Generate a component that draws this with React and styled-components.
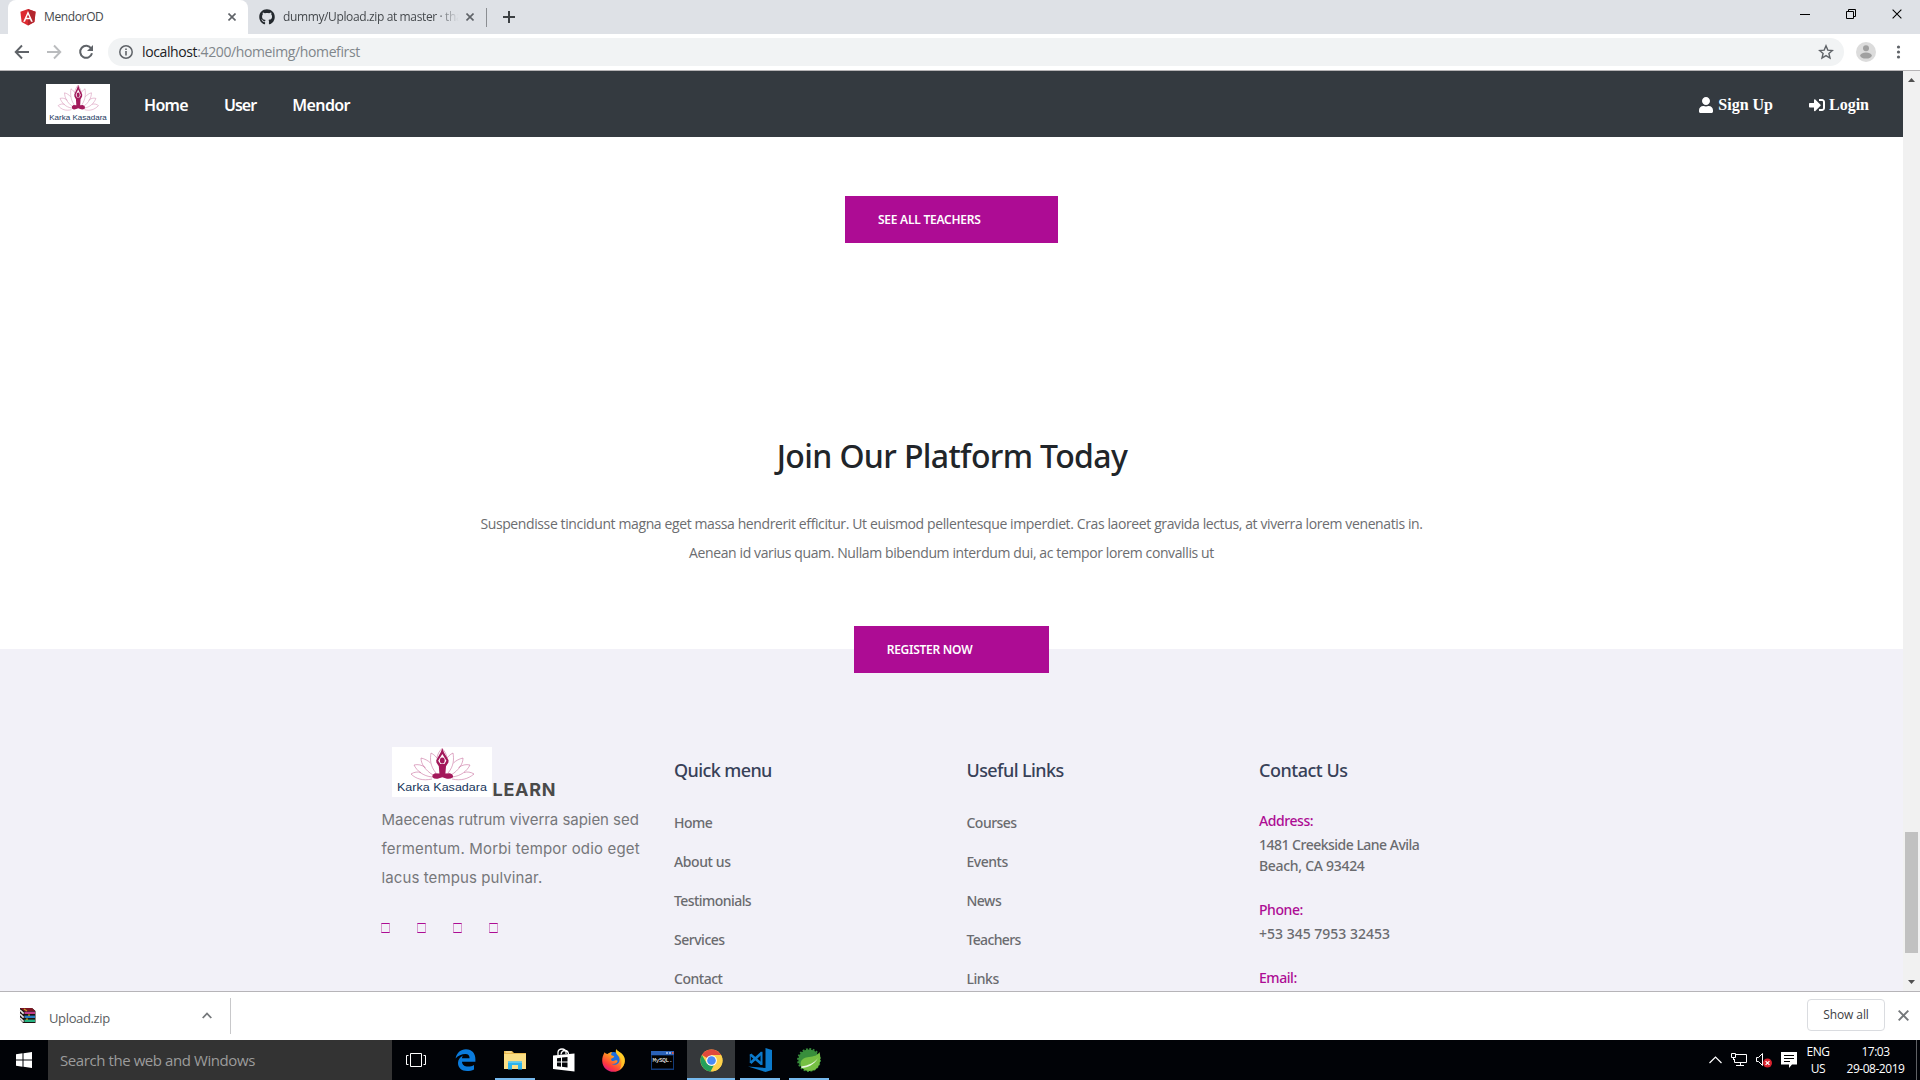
import React from 'react';
import styled, { createGlobalStyle } from 'styled-components';
import { FaUser, FaSignInAlt, FaGithub } from 'react-icons/fa';

const UI = '"Open Sans", "Noto Sans", sans-serif';
const SEMI = '"Noto Sans", "Open Sans", sans-serif';

const Global = createGlobalStyle`
  * { box-sizing: border-box; }
  body { margin: 0; background: #fff; overflow: hidden; font-family: ${UI}; }
  svg { display: block; flex: none; }
`;

const Screen = styled.div`
  width: 1920px;
  height: 1080px;
  display: flex;
  flex-direction: column;
  overflow: hidden;
`;

/* ---------- browser chrome ---------- */
const TabStrip = styled.div`
  height: 34px;
  background: #dee1e6;
  display: flex;
  align-items: stretch;
  padding-left: 8px;
`;
const Tab = styled.div`
  width: ${(p) => (p.$active ? 240 : 238)}px;
  display: flex;
  align-items: center;
  padding: 0 12px 0 ${(p) => (p.$active ? 12 : 11)}px;
  background: ${(p) => (p.$active ? '#fff' : 'transparent')};
  border-radius: 8px 8px 0 0;
`;
const TabTitle = styled.span`
  flex: 1;
  min-width: 0;
  margin-left: 8px;
  overflow: hidden;
  white-space: nowrap;
  font-size: 12px;
  line-height: 16px;
  letter-spacing: -0.37px;
  color: #45494d;
  ${(p) => p.$fade && 'mask-image: linear-gradient(to right, #000 84%, transparent 96%);'}
`;
const TabDivider = styled.div`
  width: 1px;
  height: 19px;
  margin: 8px 16px 0 0;
  background: #8b8e92;
`;
const NewTab = styled.div`
  display: flex;
  align-items: center;
  flex: 1;
`;
const WindowControls = styled.div`
  display: flex;
  align-items: flex-start;
  gap: 36px;
  padding: 9px 18px 0 0;
`;
const Toolbar = styled.div`
  height: 37px;
  background: #fff;
  border-bottom: 1px solid #b6b4b6;
  display: flex;
  align-items: center;
  padding: 0 17px 0 14px;
`;
const NavIcons = styled.div`
  display: flex;
  gap: 16px;
`;
const Omnibox = styled.div`
  flex: 1;
  height: 28px;
  margin: 0 12px 0 14px;
  padding: 0 10px 0 11px;
  border-radius: 14px;
  background: #f1f3f4;
  display: flex;
  align-items: center;
`;
const Url = styled.span`
  flex: 1;
  margin-left: 9px;
  font-size: 14px;
  line-height: 18px;
  letter-spacing: -0.38px;
  color: #80868b;
`;
const Host = styled.span`
  color: #202124;
`;
const MoreButton = styled.div`
  margin-left: 20px;
`;

/* ---------- page ---------- */
const Viewport = styled.div`
  height: 920px;
  display: flex;
`;
const Page = styled.div`
  width: 1903px;
  display: flex;
  flex-direction: column;
  overflow: hidden;
`;
const ScrollTrack = styled.div`
  width: 17px;
  background: #f1f1f1;
  display: flex;
  flex-direction: column;
  align-items: center;
  padding: 7px 0 7px;
`;
const ScrollSpace = styled.div`
  flex: 1;
  display: flex;
  flex-direction: column;
  justify-content: flex-end;
  padding-bottom: 27px;
`;
const ScrollThumb = styled.div`
  width: 13px;
  height: 121px;
  background: #c1c1c1;
`;
const Navbar = styled.nav`
  height: 66px;
  flex: none;
  background: #343a40;
  display: flex;
  align-items: center;
  padding: 0 34px 0 46px;
`;
const NavLinks = styled.div`
  flex: 1;
  display: flex;
  gap: 36px;
  margin-left: 34px;
  padding-top: 1px;
`;
const NavLink = styled.a`
  font: 600 16px/24px ${SEMI};
  letter-spacing: ${(p) => p.$ls}px;
  color: #fff;
`;
const AuthLinks = styled.div`
  display: flex;
  gap: 36px;
  padding-top: 1px;
`;
const AuthLink = styled.a`
  display: flex;
  align-items: center;
  gap: 4px;
  font: 700 16px/24px "Liberation Serif", serif;
  color: #fff;
`;
const Teachers = styled.section`
  flex: none;
  display: flex;
  flex-direction: column;
  align-items: center;
  padding: 59px 0 194px;
`;
const CtaButton = styled.button`
  width: ${(p) => p.$w}px;
  height: 47px;
  padding: 0 0 0 33px;
  border: 0;
  background: #ad0c94;
  color: #fff;
  text-align: left;
  font: 600 12px/47px ${SEMI};
  letter-spacing: ${(p) => p.$ls}px;
  position: relative;
`;
const Join = styled.section`
  flex: none;
  height: 212px;
  display: flex;
  flex-direction: column;
  align-items: center;
`;
const JoinTitle = styled.h2`
  margin: 0 0 0 1px;
  font: 500 32px/38px ${SEMI};
  letter-spacing: -0.63px;
  color: #212529;
`;
const JoinText = styled.p`
  width: 960px;
  margin: 34px 0 59px;
  text-align: center;
  font: 400 14px/29px ${UI};
  letter-spacing: -0.388px;
  color: #6c6d70;
`;
const JoinAction = styled.div`
  display: flex;
  justify-content: center;
  height: 23px;
`;
const Footer = styled.footer`
  flex: 1;
  min-height: 0;
  overflow: hidden;
  background: #f2f1f8;
  display: grid;
  grid-template-columns: repeat(4, 292.5px);
  justify-content: center;
  align-content: start;
`;
const Column = styled.div`
  padding: 108px 15px 0;
`;
const AboutColumn = styled.div`
  padding: 98px 0 0 15px;
`;
const Brand = styled.div`
  display: flex;
  align-items: flex-end;
  padding-left: 10px;
`;
const BrandName = styled.span`
  height: 17px;
  margin-left: 1px;
  font: 700 18px/19px Inter, sans-serif;
  letter-spacing: 0.75px;
  color: #4a4a4a;
`;
const AboutText = styled.p`
  margin: 8px 0 0;
  white-space: nowrap;
  font: 400 15px/29px Inter, sans-serif;
  color: #76777a;
`;
const AboutLine = styled.span`
  display: block;
  letter-spacing: ${(p) => p.$ls}px;
`;
const Socials = styled.div`
  display: flex;
  gap: 27px;
  margin: 31px 0 0 -1px;
`;
const Social = styled.span`
  width: 9px;
  height: 10px;
  border: 1px solid #ad0c94;
  border-left-color: #d79acf;
  border-right-color: #d79acf;
`;
const ColumnTitle = styled.h3`
  margin: 0;
  font: 500 18px/26px ${SEMI};
  letter-spacing: ${(p) => p.$ls}px;
  color: #384158;
`;
const LinkList = styled.ul`
  list-style: none;
  margin: 29px 0 0;
  padding: 0;
  display: flex;
  flex-direction: column;
  gap: 18px;
`;
const FooterLink = styled.li`
  font: 500 14px/21px ${SEMI};
  letter-spacing: ${(p) => p.$ls}px;
  color: #6a6b6f;
`;
const ContactList = styled.div`
  margin-top: 27px;
  display: flex;
  flex-direction: column;
  gap: 23px;
`;
const ContactLabel = styled.div`
  font: 500 14px/21px ${SEMI};
  letter-spacing: -0.43px;
  color: #ad0c94;
  margin-bottom: 3px;
`;
const ContactLine = styled.div`
  font: 500 14px/21px ${SEMI};
  letter-spacing: ${(p) => p.$ls}px;
  white-space: nowrap;
  color: #6a6b6f;
`;

/* ---------- download shelf ---------- */
const Shelf = styled.div`
  height: 49px;
  background: #fff;
  border-top: 1px solid #b6b4b8;
  display: flex;
  align-items: center;
  padding: 0 11px 2px 19px;
`;
const FileName = styled.span`
  width: 153px;
  margin: 6px 0 0 13px;
  font-size: 13px;
  line-height: 18px;
  letter-spacing: -0.36px;
  color: #5a5d61;
`;
const ShelfDivider = styled.div`
  width: 1px;
  height: 36px;
  margin: 2px 0 0 18px;
  background: #c8c8ca;
`;
const ShelfSpace = styled.div`
  flex: 1;
`;
const ShowAll = styled.button`
  width: 78px;
  height: 32px;
  margin: 0 13px 0 0;
  padding: 0;
  border: 1px solid #dadce0;
  border-radius: 4px;
  background: #fff;
  font: 400 12px/18px ${UI};
  letter-spacing: -0.1px;
  color: #3c4043;
`;

/* ---------- taskbar ---------- */
const Taskbar = styled.div`
  height: 40px;
  background: #010307;
  display: flex;
`;
const Start = styled.div`
  width: 48px;
  display: flex;
  align-items: center;
  justify-content: center;
`;
const Search = styled.div`
  width: 344px;
  background: #333;
  padding-left: 12px;
  font: 400 15px/40px ${UI};
  letter-spacing: -0.42px;
  color: #9c9c9c;
`;
const Apps = styled.div`
  flex: 1;
  display: flex;
  gap: 1px;
`;
const AppButton = styled.div`
  width: 48px;
  display: flex;
  align-items: center;
  justify-content: center;
  background-color: ${(p) => (p.$active ? '#35383b' : 'transparent')};
  background-image: ${(p) => (p.$open || p.$active ? 'linear-gradient(#76b9ed, #76b9ed)' : 'none')};
  background-size: ${(p) => (p.$active ? '48px 2px' : '40px 2px')};
  background-position: 50% 100%;
  background-repeat: no-repeat;
  &:nth-child(n + 3) { transform: translateX(1px); }
`;
const Tray = styled.div`
  display: flex;
  align-items: center;
  padding-right: 3px;
  color: #fff;
`;
const TrayIcons = styled.div`
  display: flex;
  align-items: center;
  gap: 9px;
`;
const TrayText = styled.div`
  width: ${(p) => p.$w}px;
  text-align: center;
  font: 400 12px/17px ${UI};
  letter-spacing: ${(p) => p.$ls}px;
  white-space: nowrap;
  padding-bottom: 1px;
`;
const ShowDesktop = styled.div`
  width: 1px;
  height: 40px;
  margin-left: 4px;
  background: #5f6164;
`;

const Cross = ({ size = 8, color = '#5f6368', w = 1.6 }) => (
  <svg width={size} height={size} viewBox="0 0 8 8">
    <path d="M.5 .5 7.5 7.5M7.5 .5 .5 7.5" stroke={color} strokeWidth={w} fill="none" />
  </svg>
);

const Angular = () => (
  <svg width="16" height="17" viewBox="0 0 16 17">
    <path d="M8 0 15.6 2.8 14.4 13 8 16.6 1.6 13 .4 2.8Z" fill="#dd2b31" />
    <path d="M8 0 15.6 2.8 14.4 13 8 16.6Z" fill="#b3262e" />
    <path d="M8 1.9 3.2 12.7H5L6 10.3H10L11 12.7H12.8ZM8 5.4 9.4 8.8H6.6Z" fill="#fff" fillRule="evenodd" />
  </svg>
);

const Lotus = ({ width, height }) => (
  <svg width={width} height={height} viewBox="0 0 100 50" preserveAspectRatio="none">
    <rect width="100" height="50" fill="#fff" />
    <g fill="none" stroke="#c9709f" strokeWidth=".6">
      <path d="M45 11C45.500 7 47.500 4 50 1.500C52.500 4 54.500 7 55 11" />
      <path d="M44 26C38 19 38 12 39 6C42 7.500 44 9.500 45.500 12M56 26C62 19 62 12 61 6C58 7.500 56 9.500 54.500 12" />
      <path d="M41 28C33 23 29 17 29 11C33 12 36 13.500 38.500 16M59 28C67 23 71 17 71 11C67 12 64 13.500 61.500 16" />
      <path d="M40 30C31 29 25 24 22 18C26 17 30 18 33.500 20.500M60 30C69 29 75 24 78 18C74 17 70 18 66.500 20.500" />
      <path d="M40 32C31 34 24 32 19 27C22 25 26 24.500 29 25.500M60 32C69 34 76 32 82 27C79 25 75 24.500 72 25.500" />
    </g>
    <g fill="#a3195b">
      <ellipse cx="50.3" cy="13.6" rx="2.4" ry="3" />
      <path d="M50.300 1.200 48.600 5.400 44.200 13.200 44.400 15.600 46.800 19.200 47.400 26.500 43 26.300Q39.600 27.400 40.400 30.200Q43 32.800 47.200 31.200L50.300 30.200 53.400 31.200Q57.600 32.800 61 30.200Q61.600 27.400 57.600 26.300L53.400 26.500 54 19.200 56.400 15.600 56.600 13.200 52 5.400ZM50.300 7 54.400 13.800 52.400 17 48.400 17 46.200 13.800Z" fillRule="evenodd" />
    </g>
    <text x="5" y="44.4" fontFamily="Liberation Sans, Arial, sans-serif" fontSize="10" fill="#17365c" textLength="90" lengthAdjust="spacingAndGlyphs">Karka Kasadara</text>
  </svg>
);

const WinRar = () => (
  <svg width="17" height="17" viewBox="0 0 17 17">
    <path d="M1 1H13L16.5 4V16H4L1 12.5Z" fill="#1d1210" />
    <path d="M1 1H13L16 4H5Z" fill="#7c1522" />
    <path d="M5.5 4.6H16V7H5.5Z" fill="#c23d8c" />
    <path d="M5.5 8.6H16V11H5.5Z" fill="#2a7fc4" />
    <path d="M5.5 12.6H16V15H5.5Z" fill="#27b483" />
    <path d="M1 3 4.6 6.6M1 7 4.6 10.6M1 11 4.6 14.6" stroke="#e8e8e8" strokeWidth="1.700" />
    <path d="M5 2 8 4M9 8.200H11M7 12.200H9" stroke="#c7a31d" strokeWidth="1.200" />
  </svg>
);

const Edge = () => (
  <svg width="21" height="22" viewBox="0 0 21 22">
    <path d="M.6 9.6C1.6 4 5.4.3 11 .3C17 .3 20.4 4.6 20.4 10V12.8H7C7.2 16 9.6 17.6 13 17.6C15.4 17.6 17.4 17 19 16V20.4C17 21.5 14.6 22 12 22C6.400 22 3 18.700 3 14C3 10.600 4.800 8 8 6.400C7.400 7.200 7 8.200 6.900 9.200H14.600C14.600 6.500 13.200 5 10.400 5C6.800 5 3 6.600 .6 9.600Z" fill="#0a7bdc" />
  </svg>
);

const Explorer = () => (
  <svg width="22" height="19" viewBox="0 0 22 19">
    <path d="M0 0H8L10 2H22V18H0Z" fill="#e9b94e" />
    <path d="M0 3H22V18H0Z" fill="#fbdf85" />
    <path d="M1.500 1H7.500" stroke="#fff3c4" />
    <path d="M4 10.500H18V18.500H14V14H8V18.500H4Z" fill="#2fb4ec" />
    <path d="M4 10.500H18V12H4Z" fill="#5bcbf5" />
  </svg>
);

const Store = () => (
  <svg width="22" height="24" viewBox="0 0 22 24">
    <path d="M5 7V4Q5.500 1 9 1Q12.500 1 13 4V6M8 6.500Q8.500 2.500 12 2.500Q15 2.500 15.500 6" fill="none" stroke="#fff" strokeWidth="1.300" />
    <path d="M0 7.500 21.500 5.500V23.500L0 21Z" fill="#fff" />
    <path d="M4 10.200 8 9.700V13.600H4ZM9 9.600 14.500 9V13.600H9ZM4 14.600H8V18.700L4 18.200ZM9 14.600H14.500V19.400L9 18.800Z" fill="#05070a" />
  </svg>
);

const Firefox = () => (
  <svg width="23" height="23" viewBox="0 0 23 23">
    <defs>
      <linearGradient id="fx" x1=".85" y1="0" x2=".2" y2="1">
        <stop offset="0" stopColor="#ffe226" />
        <stop offset=".4" stopColor="#ff9a1f" />
        <stop offset=".75" stopColor="#ff3c3c" />
        <stop offset="1" stopColor="#d6128c" />
      </linearGradient>
    </defs>
    <circle cx="11.500" cy="11.500" r="8.500" fill="#1c6fe0" />
    <path d="M2.600 3.200C3.400 4.100 4.400 4.800 5.600 4.900C7 3.500 8.800 3 10.600 3.200C9.200 4.200 8.800 5.300 9.400 6.300C10.300 6.900 11.600 6.700 12.200 7.400C11.600 8.900 9.400 8.900 9 10.400C9.400 12 11 12.400 13 11.500C14.400 11 15.500 11.500 15.600 12.300C14.800 14.500 12 15.600 9.400 14.800C12.800 17.300 17.400 15 17.600 11C17.700 7.900 16 6.500 14.600 4.900C13.700 3.600 13.500 1.900 14.200 .3C15.400 2.200 17.600 2.700 19.800 4.700C22 6.800 23 9.400 22.800 12.200C22.300 18.400 17.600 22.800 11.500 22.800C5.200 22.800 .4 18 .2 11.900C.1 8.700 1.200 5.800 2.600 3.200Z" fill="url(#fx)" />
    <path d="M19.800 4.700C22 6.800 23 9.400 22.800 12.200C22.500 15.800 20.500 19 17.500 21C19.700 17.400 20.600 11 17.500 7.500C16 5.700 13.300 3.400 14.200 .3C15.400 2.200 17.600 2.700 19.800 4.700Z" fill="#ffd02a" opacity=".75" />
  </svg>
);

const MySql = () => (
  <svg width="23" height="19" viewBox="0 0 23 19">
    <rect width="23" height="19" fill="#123a78" />
    <rect width="23" height="4" fill="#2a62b8" />
    <path d="M15 2H17M18 2H20" stroke="#b7cdf0" strokeWidth="1.500" />
    <path d="M21 2H22.500" stroke="#e0563f" strokeWidth="2" />
    <rect x="1" y="4.500" width="21" height="13" fill="#000" />
    <text x="1.500" y="10.800" fontFamily="Liberation Mono, monospace" fontSize="6" fill="#fff" textLength="20">MySQL.</text>
  </svg>
);

const Chrome = () => (
  <svg width="23" height="23" viewBox="0 0 24 24">
    <circle cx="12" cy="12" r="11.500" fill="#fdd14b" />
    <path d="M12 12 2 6.250A11.500 11.500 0 0 1 22 6.300H12Z" fill="#e04a3c" />
    <path d="M12 6.300H22A11.500 11.500 0 0 1 12 23.500L17 14.800Z" fill="#fdd14b" />
    <path d="M2 6.250 7 14.900 12 17.700 14.500 17 11 23.450A11.500 11.500 0 0 1 2 6.250Z" fill="#24a05a" />
    <circle cx="12" cy="12" r="5.600" fill="#fff" />
    <circle cx="12" cy="12" r="4.500" fill="#4a8af4" />
  </svg>
);

const VsCode = () => (
  <svg width="24" height="24" viewBox="0 0 24 24">
    <path d="M17.500 0 24 2V22L17.500 24 0 18.500 17.500 20Z" fill="#0b7acb" />
    <path d="M2.500 6.500 13.500 16M2.500 15 13.500 5" stroke="#0b7acb" strokeWidth="2.600" fill="none" />
    <path d="M13.500 3.800V17" stroke="#0b7acb" strokeWidth="2" />
    <path d="M2.300 6V15" stroke="#0b7acb" strokeWidth="1" />
  </svg>
);

const Spring = () => (
  <svg width="24" height="24" viewBox="0 0 24 24">
    <circle cx="12" cy="12" r="10.600" fill="#388e3c" />
    <circle cx="12" cy="12" r="11" fill="none" stroke="#388e3c" strokeWidth="1.800" strokeDasharray="1.900 1.556" />
    <path d="M22.500 4C24.500 12 23 22 14 22.800C8 23.400 4 20.500 3.600 16C3.500 11 8 9.500 12 9C17 8.500 20.500 7.500 22.500 4Z" fill="#76c043" />
    <path d="M4.500 20C11 19.500 17 17 21 10C17.500 14.800 11.500 17.500 4.200 18.400Z" fill="#e9f7e0" />
  </svg>
);

const quick = [['Home', -0.48], ['About us', -0.4], ['Testimonials', -0.56], ['Services', -0.48], ['Contact', -0.48]];
const useful = [['Courses', -0.52], ['Events', -0.48], ['News', -0.5], ['Teachers', -0.66], ['Links', -0.48]];
const contacts = [
  { label: 'Address:', lines: [['1481 Creekside Lane Avila', -0.51], ['Beach, CA 93424', -0.3]] },
  { label: 'Phone:', lines: [['+53 345 7953 32453', 0]] },
  { label: 'Email:', lines: [] },
];

const Links = ({ title, ls, items }) => (
  <Column>
    <ColumnTitle $ls={ls}>{title}</ColumnTitle>
    <LinkList>
      {items.map(([t, s]) => (
        <FooterLink key={t} $ls={s}>{t}</FooterLink>
      ))}
    </LinkList>
  </Column>
);

export default function App() {
  return (
    <Screen>
      <Global />
      <TabStrip>
        <Tab $active>
          <Angular />
          <TabTitle>MendorOD</TabTitle>
          <Cross />
        </Tab>
        <Tab>
          <FaGithub size={16} color="#24292e" />
          <TabTitle $fade>dummy/Upload.zip at master · tha</TabTitle>
          <Cross />
        </Tab>
        <TabDivider />
        <NewTab>
          <svg width="12" height="12" viewBox="0 0 12 12">
            <path d="M6 0V12M0 6H12" stroke="#3c4043" strokeWidth="2" />
          </svg>
        </NewTab>
        <WindowControls>
          <svg width="10" height="11" viewBox="0 0 10 11"><path d="M0 5.500H10" stroke="#000" /></svg>
          <svg width="10" height="10" viewBox="0 0 10 10"><path d="M.5 2.500H7.500V9.500H.5ZM2.500 2.500V.5H9.500V7.500H7.500" fill="none" stroke="#000" /></svg>
          <Cross size={10} color="#000" w={0.85} />
        </WindowControls>
      </TabStrip>
      <Toolbar>
        <NavIcons>
          <svg width="16" height="16" viewBox="0 0 16 16"><path d="M15 8H2M8 1.500 1.700 8 8 14.500" fill="none" stroke="#5f6368" strokeWidth="1.900" /></svg>
          <svg width="16" height="16" viewBox="0 0 16 16"><path d="M1 8H14M8 1.500 14.300 8 8 14.500" fill="none" stroke="#babcbe" strokeWidth="1.900" /></svg>
          <svg width="16" height="16" viewBox="0 0 16 16"><path d="M13.200 4.500A6 6 0 1 0 14 9.300" fill="none" stroke="#5f6368" strokeWidth="2" /><path d="M15 1V7H9Z" fill="#5f6368" /></svg>
        </NavIcons>
        <Omnibox>
          <svg width="14" height="14" viewBox="0 0 14 14">
            <circle cx="7" cy="7" r="6.200" fill="none" stroke="#5f6368" strokeWidth="1.500" />
            <path d="M7 6V10.500M7 3.500V5" stroke="#5f6368" strokeWidth="1.600" />
          </svg>
          <Url><Host>localhost</Host>:4200/homeimg/homefirst</Url>
          <svg width="16" height="16" viewBox="0 0 16 16">
            <path d="M8 1.800 9.800 6.100 14.400 6.500 10.900 9.500 12 14 8 11.600 4 14 5.100 9.500 1.600 6.500 6.200 6.100Z" fill="none" stroke="#5f6368" strokeWidth="1.400" />
          </svg>
        </Omnibox>
        <svg width="20" height="20" viewBox="0 0 20 20">
          <circle cx="10" cy="10" r="10" fill="#dcdcdc" />
          <circle cx="10" cy="6.200" r="3" fill="#a0a0a0" />
          <ellipse cx="10" cy="13.600" rx="5.800" ry="3" fill="#a0a0a0" />
        </svg>
        <MoreButton>
          <svg width="7" height="14" viewBox="0 0 7 14">
            <g fill="#5f6368"><circle cx="2.500" cy="2" r="1.600" /><circle cx="2.500" cy="7" r="1.600" /><circle cx="2.500" cy="12" r="1.600" /></g>
          </svg>
        </MoreButton>
      </Toolbar>

      <Viewport>
        <Page>
          <Navbar>
            <Lotus width={64} height={40} />
            <NavLinks>
              <NavLink $ls={-0.7}>Home</NavLink>
              <NavLink $ls={-0.95}>User</NavLink>
              <NavLink $ls={-0.6}>Mendor</NavLink>
            </NavLinks>
            <AuthLinks>
              <AuthLink><FaUser size={16} />Sign Up</AuthLink>
              <AuthLink><FaSignInAlt size={16} />Login</AuthLink>
            </AuthLinks>
          </Navbar>
          <Teachers>
            <CtaButton $w={213} $ls={-0.25}>SEE ALL TEACHERS</CtaButton>
          </Teachers>
          <Join>
            <JoinTitle>Join Our Platform Today</JoinTitle>
            <JoinText>
              Suspendisse tincidunt magna eget massa hendrerit efficitur. Ut euismod pellentesque imperdiet. Cras laoreet gravida lectus, at viverra lorem venenatis in. Aenean id varius quam. Nullam bibendum interdum dui, ac tempor lorem convallis ut
            </JoinText>
            <JoinAction>
              <CtaButton $w={195.5} $ls={-0.27}>REGISTER NOW</CtaButton>
            </JoinAction>
          </Join>
          <Footer>
            <AboutColumn>
              <Brand>
                <Lotus width={100} height={50} />
                <BrandName>LEARN</BrandName>
              </Brand>
              <AboutText>
                <AboutLine $ls={-0.04}>Maecenas rutrum viverra sapien sed</AboutLine>
                <AboutLine $ls={0.17}>fermentum. Morbi tempor odio eget</AboutLine>
                <AboutLine $ls={0.1}>lacus tempus pulvinar.</AboutLine>
              </AboutText>
              <Socials>
                <Social /><Social /><Social /><Social />
              </Socials>
            </AboutColumn>
            <Links title="Quick menu" ls={-0.6} items={quick} />
            <Links title="Useful Links" ls={-0.58} items={useful} />
            <Column>
              <ColumnTitle $ls={-0.48}>Contact Us</ColumnTitle>
              <ContactList>
                {contacts.map((c) => (
                  <div key={c.label}>
                    <ContactLabel>{c.label}</ContactLabel>
                    {c.lines.map(([t, s]) => <ContactLine key={t} $ls={s}>{t}</ContactLine>)}
                  </div>
                ))}
              </ContactList>
            </Column>
          </Footer>
        </Page>
        <ScrollTrack>
          <svg width="7" height="4" viewBox="0 0 7 4"><path d="M0 4 3.500 0 7 4Z" fill="#505050" /></svg>
          <ScrollSpace><ScrollThumb /></ScrollSpace>
          <svg width="7" height="4" viewBox="0 0 7 4"><path d="M0 0 3.500 4 7 0Z" fill="#505050" /></svg>
        </ScrollTrack>
      </Viewport>

      <Shelf>
        <WinRar />
        <FileName>Upload.zip</FileName>
        <svg width="10" height="7" viewBox="0 0 10 7"><path d="M.7 6 5 1.500 9.300 6" fill="none" stroke="#75787b" strokeWidth="1.800" /></svg>
        <ShelfDivider />
        <ShelfSpace />
        <ShowAll>Show all</ShowAll>
        <Cross size={11} color="#75787b" w={1.4} />
      </Shelf>

      <Taskbar>
        <Start>
          <svg width="16" height="16" viewBox="0 0 16 16"><path d="M0 2.200 6.500 1.300V7.500H0ZM7.500 1.200 16 0V7.500H7.500ZM0 8.500H6.500V14.700L0 13.800ZM7.500 8.500H16V16L7.500 14.800Z" fill="#fff" /></svg>
        </Start>
        <Search>Search the web and Windows</Search>
        <Apps>
          <AppButton>
            <svg width="20" height="14" viewBox="0 0 20 14"><path d="M4.500 .5H15.500V13.500H4.500ZM2.500 2.500H.5V11.500H2.500M17.500 2.500H19.500V11.500H17.500" fill="none" stroke="#fff" /></svg>
          </AppButton>
          <AppButton><Edge /></AppButton>
          <AppButton $open><Explorer /></AppButton>
          <AppButton><Store /></AppButton>
          <AppButton><Firefox /></AppButton>
          <AppButton><MySql /></AppButton>
          <AppButton $active><Chrome /></AppButton>
          <AppButton $open><VsCode /></AppButton>
          <AppButton $open><Spring /></AppButton>
        </Apps>
        <Tray>
          <TrayIcons>
            <svg width="13" height="8" viewBox="0 0 13 8"><path d="M.5 7 6.500 1 12.500 7" fill="none" stroke="#fff" strokeWidth="1.200" /></svg>
            <svg width="16" height="14" viewBox="0 0 16 14"><path d="M5 1.500H15.500V9.500H3.500V6M9.500 9.500V12.500M5 12.500H13M.5 .5H4.500V4.500H.5ZM2.500 4.500V7" fill="none" stroke="#fff" /></svg>
            <svg width="16" height="16" viewBox="0 0 16 16">
              <path d="M.5 5.500H2.500L6.500 1.500V13.500L2.500 9.500H.5Z" fill="none" stroke="#fff" />
              <circle cx="11.500" cy="11" r="4.500" fill="#d9232e" />
              <path d="M9.600 9.100 13.400 12.900M13.400 9.100 9.600 12.900" stroke="#fff" strokeWidth="1.200" />
            </svg>
            <svg width="16" height="16" viewBox="0 0 16 16"><path d="M0 0H16V12.500H11L8 16V12.500H0Z" fill="#fff" /><path d="M3 3.500H13M3 6.500H13M3 9.500H9" stroke="#000" /></svg>
          </TrayIcons>
          <TrayText $w={42} $ls={-0.4}>ENG<br />US</TrayText>
          <TrayText $w={73} $ls={-0.48}>17:03<br />29-08-2019</TrayText>
          <ShowDesktop />
        </Tray>
      </Taskbar>
    </Screen>
  );
}
